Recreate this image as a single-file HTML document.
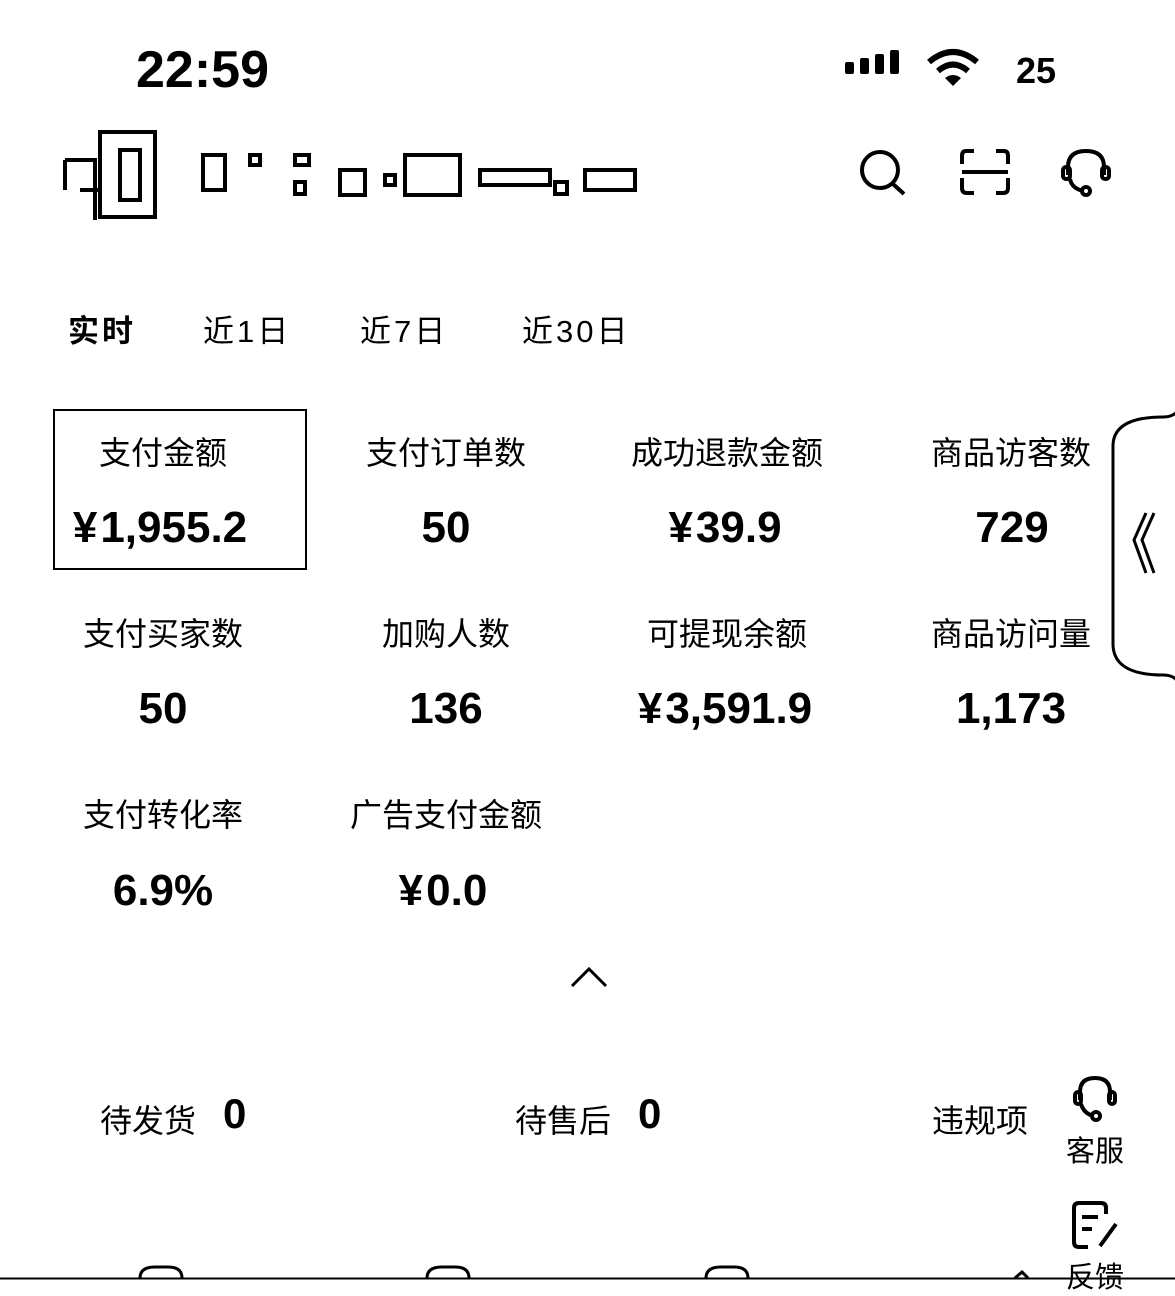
<!DOCTYPE html>
<html><head><meta charset="utf-8"><style>
*{margin:0;padding:0;box-sizing:border-box}
body{width:1175px;height:1280px;background:#fff;position:relative;overflow:hidden;font-family:"Liberation Sans","Noto Sans CJK SC",sans-serif;color:#000}
.a{position:absolute;white-space:nowrap}
.lab{font-size:32px;transform:translateX(-50%)}
.val{font-size:44px;font-weight:bold;transform:translateX(-50%)}
.val i{font-style:normal;margin-right:3px}
.tab{font-size:31px;top:306px;letter-spacing:3px}
</style></head><body>
<div class="a" style="left:136px;top:40px;font-size:52px;font-weight:bold">22:59</div>
<svg class="a" style="left:845px;top:48px" width="70" height="30"><rect x="0" y="14" width="9" height="12" rx="2"/><rect x="15" y="10" width="9" height="16" rx="2"/><rect x="30" y="6" width="9" height="20" rx="2"/><rect x="45" y="2" width="9" height="24" rx="2"/></svg>
<svg class="a" style="left:925px;top:48px" width="56" height="40"><path d="M4 14 Q28 -6 52 14" stroke="#000" stroke-width="6" fill="none"/><path d="M13 23 Q28 10 43 23" stroke="#000" stroke-width="6" fill="none"/><path d="M20 30 L28 38 L36 30 Q28 24 20 30Z"/></svg>
<div class="a" style="left:1016px;top:50px;font-size:36px;font-weight:bold">25</div>
<svg class="a" style="left:60px;top:120px" width="100" height="100" fill="none" stroke="#000" stroke-width="4"><rect x="40" y="12" width="55" height="85"/><path d="M5 40h30v60M5 40v30M20 70h20M60 30h20v50h-20z"/></svg>
<svg class="a" style="left:200px;top:150px" width="440" height="50" fill="none" stroke="#000" stroke-width="4"><rect x="3" y="5" width="22" height="35"/><rect x="50" y="5" width="10" height="10"/><rect x="95" y="5" width="14" height="10"/><rect x="95" y="32" width="10" height="12"/><rect x="140" y="20" width="25" height="25"/><rect x="185" y="25" width="10" height="10"/><rect x="205" y="5" width="55" height="40"/><rect x="280" y="20" width="70" height="15"/><rect x="355" y="32" width="12" height="12"/><rect x="385" y="20" width="50" height="20"/></svg>
<svg class="a" style="left:858px;top:148px" width="52" height="50" fill="none" stroke="#000" stroke-width="4"><circle cx="22" cy="22" r="18"/><path d="M35 36 L46 46"/></svg>
<svg class="a" style="left:958px;top:148px" width="54" height="48" fill="none" stroke="#000" stroke-width="4"><path d="M16 3H8Q4 3 4 8V16M38 3H46Q50 3 50 8V16M4 30V40Q4 45 9 45H16M50 30V40Q50 45 45 45H38"/><path d="M4 24H50"/></svg>
<svg class="a" style="left:1058px;top:145px" width="56" height="56" fill="none" stroke="#000" stroke-width="4"><path d="M10 30V22Q10 6 28 6Q46 6 46 22V30"/><rect x="5" y="22" width="7" height="12" rx="3"/><rect x="44" y="22" width="7" height="12" rx="3"/><path d="M12 34Q14 44 26 46"/><circle cx="28" cy="46" r="4"/></svg>
<div class="a tab" style="left:68px;font-weight:bold">实时</div>
<div class="a tab" style="left:203px">近1日</div>
<div class="a tab" style="left:360px">近7日</div>
<div class="a tab" style="left:522px">近30日</div>
<div class="a" style="left:53px;top:409px;width:254px;height:161px;border:2px solid #000"></div>
<div class="a lab" style="left:163px;top:428px">支付金额</div>
<div class="a lab" style="left:446px;top:428px">支付订单数</div>
<div class="a lab" style="left:727px;top:428px">成功退款金额</div>
<div class="a lab" style="left:1011px;top:428px">商品访客数</div>
<div class="a val" style="left:160px;top:503px"><i>¥</i>1,955.2</div>
<div class="a val" style="left:446px;top:503px">50</div>
<div class="a val" style="left:725px;top:503px"><i>¥</i>39.9</div>
<div class="a val" style="left:1012px;top:503px">729</div>
<div class="a lab" style="left:163px;top:609px">支付买家数</div>
<div class="a lab" style="left:446px;top:609px">加购人数</div>
<div class="a lab" style="left:727px;top:609px">可提现余额</div>
<div class="a lab" style="left:1011px;top:609px">商品访问量</div>
<div class="a val" style="left:163px;top:684px">50</div>
<div class="a val" style="left:446px;top:684px">136</div>
<div class="a val" style="left:725px;top:684px"><i>¥</i>3,591.9</div>
<div class="a val" style="left:1011px;top:684px">1,173</div>
<div class="a lab" style="left:163px;top:790px">支付转化率</div>
<div class="a lab" style="left:446px;top:790px">广告支付金额</div>
<div class="a val" style="left:163px;top:866px">6.9%</div>
<div class="a val" style="left:443px;top:866px"><i>¥</i>0.0</div>
<svg class="a" style="left:1108px;top:405px" width="70" height="280" fill="none" stroke="#000" stroke-width="3"><path d="M70 5Q66 12 55 12Q6 12 5 40V240Q6 270 55 270Q66 270 70 277"/><path d="M38 108L26 135L38 168M46 108L34 135L46 168"/></svg>
<svg class="a" style="left:570px;top:966px" width="38" height="22" fill="none" stroke="#000" stroke-width="3"><path d="M2 20L19 3L36 20"/></svg>
<div class="a" style="left:100px;top:1096px;font-size:32px">待发货</div>
<div class="a" style="left:223px;top:1090px;font-size:42px;font-weight:bold">0</div>
<div class="a" style="left:515px;top:1096px;font-size:32px">待售后</div>
<div class="a" style="left:638px;top:1090px;font-size:42px;font-weight:bold">0</div>
<div class="a" style="left:932px;top:1096px;font-size:32px">违规项</div>
<svg class="a" style="left:1070px;top:1074px" width="50" height="50" fill="none" stroke="#000" stroke-width="4"><path d="M10 26V18Q10 4 25 4Q40 4 40 18V26"/><rect x="5" y="18" width="6" height="12" rx="3"/><rect x="39" y="18" width="6" height="12" rx="3"/><path d="M11 30Q14 40 24 42"/><circle cx="26" cy="42" r="4"/></svg>
<div class="a" style="left:1066px;top:1128px;font-size:29px">客服</div>
<svg class="a" style="left:1070px;top:1200px" width="52" height="52" fill="none" stroke="#000" stroke-width="4"><path d="M36 14V8Q36 3 31 3H9Q4 3 4 8V42Q4 47 9 47H18"/><path d="M12 17H28M12 29H22M46 24L30 46"/></svg>
<div class="a" style="left:1066px;top:1254px;font-size:29px">反馈</div>
<svg class="a" style="left:0;top:1262px" width="1175" height="18" fill="none" stroke="#000" stroke-width="3"><path d="M140 16Q140 5 155 5H168Q182 5 182 16M427 16Q427 5 442 5H455Q469 5 469 16M706 16Q706 5 721 5H734Q748 5 748 16M1015 16L1022 10L1028 16"/><path d="M0 16.5H1175" stroke-width="2"/></svg>
</body></html>
